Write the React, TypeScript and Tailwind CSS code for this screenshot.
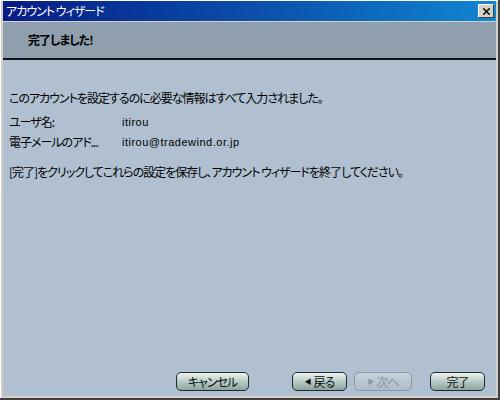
import { X } from "lucide-react";

const jp = "font-['MS_UI_Gothic','Noto_Sans_CJK_JP',sans-serif] [font-feature-settings:'palt'] tracking-[-1px]";

function WizButton({ label, arrow, disabled }: { label: string; arrow?: "left" | "right"; disabled?: boolean }) {
    return (
        <button
            disabled={disabled}
            className={`w-full h-[19px] flex items-center justify-center gap-[3px] rounded-[5px] border text-[12px] leading-none ${jp} ${
                disabled
                    ? "border-[#8a9aa8] bg-gradient-to-b from-[#c6d2dc] to-[#aebcc8] text-[#8796a4]"
                    : "border-[#1e2a30] bg-gradient-to-b from-[#eef4f2] via-[#b8cac6] to-[#8fa4a0] text-[#0a1010]"
            }`}
        >
            {arrow === "left" && <span className="text-[7px] leading-none">◀</span>}
            {arrow === "right" && <span className="text-[7px] leading-none">▶</span>}
            {label}
        </button>
    );
}

export default function App() {
    return (
        <div className="w-[500px] h-[400px] bg-[#d4d0c8] border-r-[2px] border-b-[2px] border-[#404040]">
            <div className="w-full h-full flex flex-col border-t border-l border-white pt-0 pl-[2px] pr-[2px] pb-[2px]">
                {/* title bar */}
                <div className="h-[20px] flex items-center justify-between pl-[3px] pr-[2px] bg-gradient-to-r from-[#0a1a86] via-[#0c4ea8] to-[#1286d2]">
                    <span className={`text-white text-[12px] ${jp}`}>アカウント ウィザード</span>
                    <div className="w-[16px] h-[14px] bg-[#d4d0c8] border-t border-l border-white border-r border-b border-r-[#404040] border-b-[#404040] flex items-center justify-center">
                        <X size={11} strokeWidth={3} color="#000" />
                    </div>
                </div>
                <div className="h-[1px] bg-[#d4d0c8]" />
                {/* header */}
                <div className="h-[38px] bg-[#8f9fae] flex items-center pl-[25px] border-b-[2px] border-[#101418]">
                    <span className={`text-[12px] font-bold text-black ${jp}`}>完了しました!</span>
                </div>
                {/* body */}
                <div className={`flex-1 bg-[#b0c0d0] flex flex-col px-[6px] text-[12px] text-black ${jp}`}>
                    <p className="mt-[29px] leading-[18px]">このアカウントを設定するのに必要な情報はすべて入力されました。</p>
                    <div className="mt-[5px] grid grid-cols-[113px_1fr] leading-[20px]">
                        <span>ユーザ名:</span>
                        <span className="font-['Liberation_Sans',sans-serif] text-[11px] tracking-[0.5px]">itirou</span>
                        <span>電子メールのアド...</span>
                        <span className="font-['Liberation_Sans',sans-serif] text-[11px] tracking-[0.5px]">itirou@tradewind.or.jp</span>
                    </div>
                    <p className="mt-[11px] leading-[18px]">[完了]をクリックしてこれらの設定を保存し、アカウント ウィザードを終了してください。</p>
                    <div className="mt-auto mb-[5px] flex items-center">
                        <div className="ml-[167px] w-[73px]">
                            <WizButton label="キャンセル" />
                        </div>
                        <div className="ml-[43px] w-[55px]">
                            <WizButton label="戻る" arrow="left" />
                        </div>
                        <div className="ml-[7px] w-[58px]">
                            <WizButton label="次へ" arrow="right" disabled />
                        </div>
                        <div className="ml-[18px] w-[55px]">
                            <WizButton label="完了" />
                        </div>
                    </div>
                </div>
            </div>
        </div>
    );
}
